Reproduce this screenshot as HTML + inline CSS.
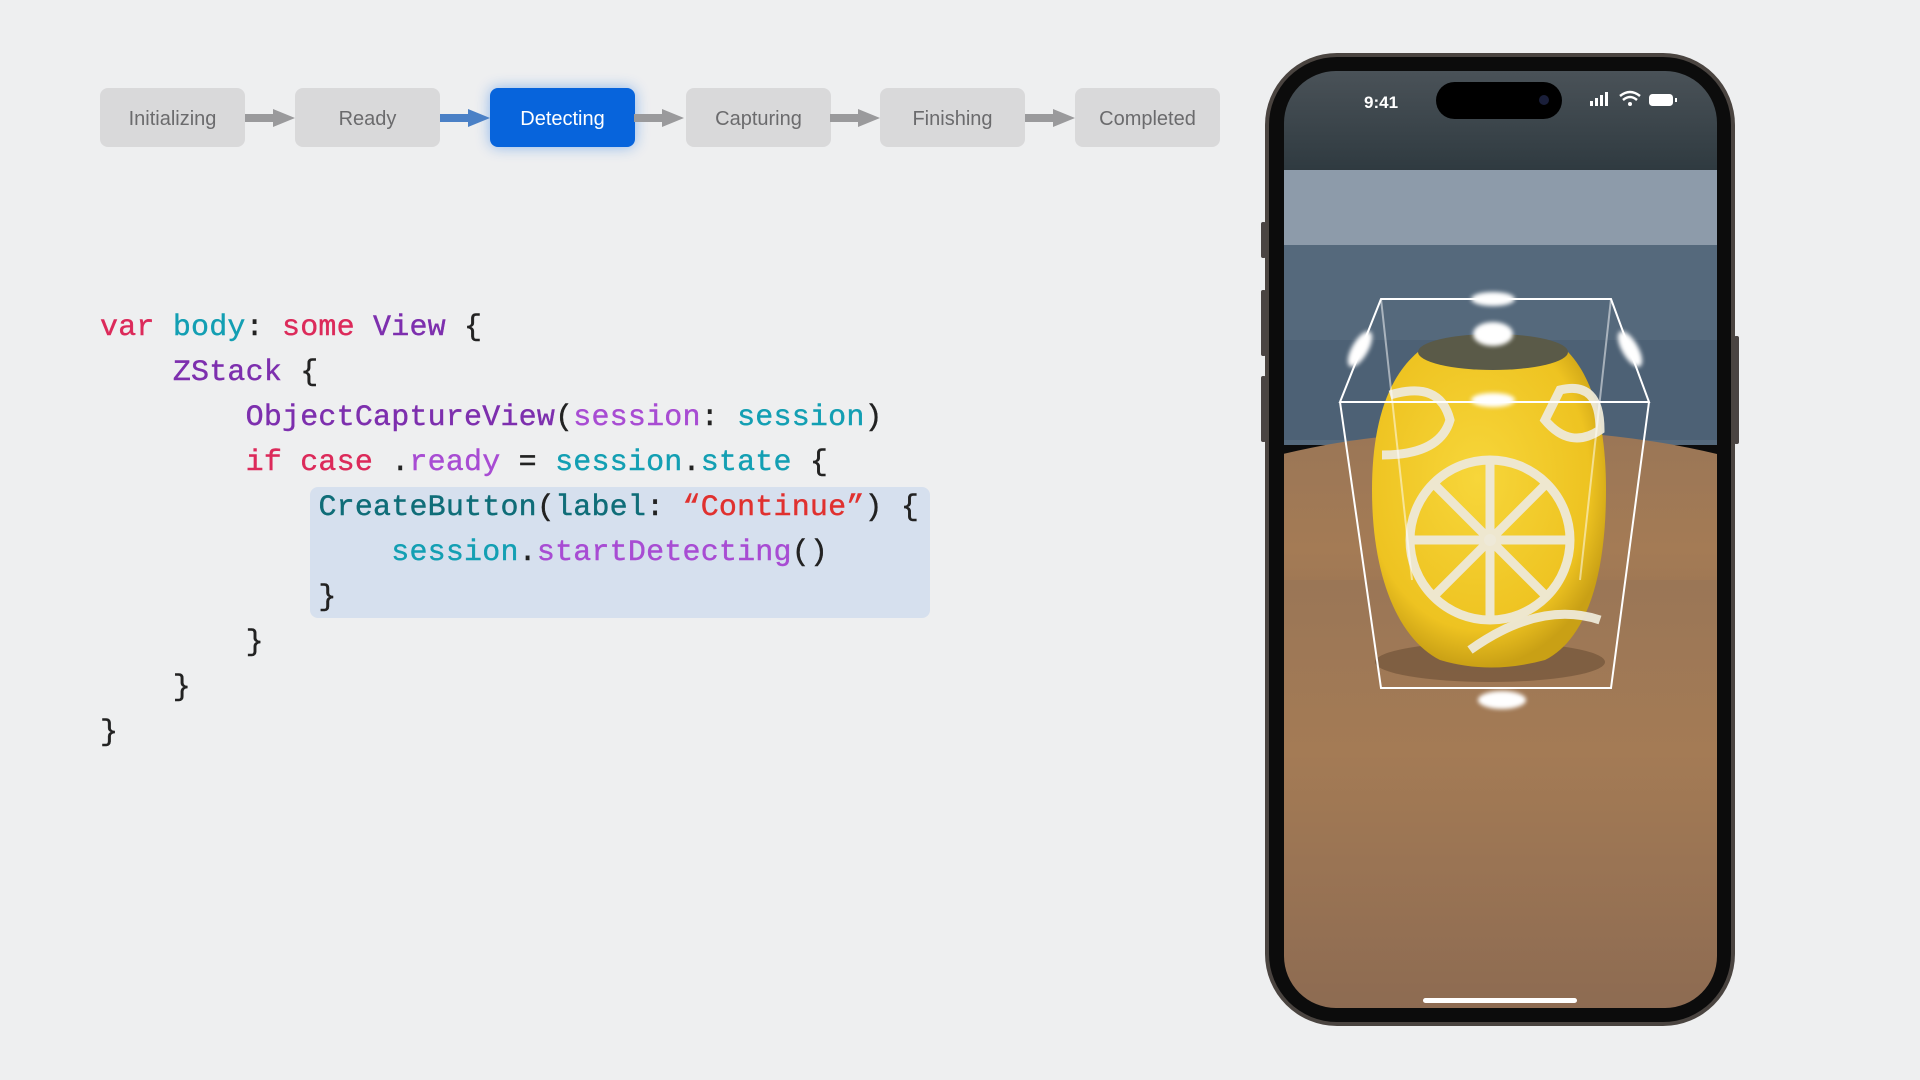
<!DOCTYPE html>
<html><head><meta charset="utf-8"><style>
*{margin:0;padding:0;box-sizing:border-box}
body{width:1920px;height:1080px;background:#eeeff0;position:relative;overflow:hidden;font-family:"Liberation Sans",sans-serif}
.box{position:absolute;top:88px;width:145px;height:59px;border-radius:8px;background:#d9d9da;color:#6b6b6d;font-size:20px;display:flex;align-items:center;justify-content:center;padding-top:4px}
.box.on{background:#0764dc;color:#fff;box-shadow:0 0 14px rgba(20,110,230,.45)}
.arr{position:absolute;top:109px;width:50px;height:18px}
.code{position:absolute;left:100px;top:306px;font-family:"Liberation Mono",monospace;font-size:30px;line-height:45px;letter-spacing:0.2px;color:#222;white-space:pre;-webkit-text-stroke:0.4px currentColor}
.hl{position:absolute;left:310px;top:487px;width:620px;height:131px;background:#d6e0ee;border-radius:8px}
.k{color:#dc2a5a}.t{color:#139fb3}.p{color:#7d2fae}.m{color:#a84cd3}.d{color:#0f6d78}.s{color:#e0312f}
</style></head><body>
<div class="box" style="left:100px">Initializing</div>
<div class="box" style="left:295px">Ready</div>
<div class="box on" style="left:490px">Detecting</div>
<div class="box" style="left:686px">Capturing</div>
<div class="box" style="left:880px">Finishing</div>
<div class="box" style="left:1075px">Completed</div>
<svg class="arr" style="left:245px" viewBox="0 0 50 18"><rect x="0" y="5" width="30" height="8" fill="#9a9a9c"/><polygon points="28,0 50,9 28,18" fill="#9a9a9c"/></svg>
<svg class="arr" style="left:440px" viewBox="0 0 50 18"><rect x="0" y="5" width="30" height="8" fill="#4a80c6"/><polygon points="28,0 50,9 28,18" fill="#4a80c6"/></svg>
<svg class="arr" style="left:634px" viewBox="0 0 50 18"><rect x="0" y="5" width="30" height="8" fill="#9a9a9c"/><polygon points="28,0 50,9 28,18" fill="#9a9a9c"/></svg>
<svg class="arr" style="left:830px" viewBox="0 0 50 18"><rect x="0" y="5" width="30" height="8" fill="#9a9a9c"/><polygon points="28,0 50,9 28,18" fill="#9a9a9c"/></svg>
<svg class="arr" style="left:1025px" viewBox="0 0 50 18"><rect x="0" y="5" width="30" height="8" fill="#9a9a9c"/><polygon points="28,0 50,9 28,18" fill="#9a9a9c"/></svg>

<div class="hl"></div>
<div class="code"><span class="k">var</span> <span class="t">body</span>: <span class="k">some</span> <span class="p">View</span> {
    <span class="p">ZStack</span> {
        <span class="p">ObjectCaptureView</span>(<span class="m">session</span>: <span class="t">session</span>)
        <span class="k">if case</span> .<span class="m">ready</span> = <span class="t">session</span>.<span class="t">state</span> {
            <span class="d">CreateButton</span>(<span class="d">label</span>: <span class="s">“Continue”</span>) {
                <span class="t">session</span>.<span class="m">startDetecting</span>()
            }
        }
    }
}</div>

<svg style="position:absolute;left:0;top:0" width="1920" height="1080">
<defs>
<linearGradient id="wood" x1="0" y1="0" x2="0" y2="1"><stop offset="0" stop-color="#9a7656"/><stop offset=".4" stop-color="#a47b55"/><stop offset="1" stop-color="#8d6b52"/></linearGradient>
<linearGradient id="top" x1="0" y1="0" x2="0" y2="1"><stop offset="0" stop-color="#4a5258"/><stop offset="1" stop-color="#2f3a40"/></linearGradient>
<radialGradient id="vase" cx=".45" cy=".4" r=".6"><stop offset="0" stop-color="#f7d63a"/><stop offset=".8" stop-color="#eec321"/><stop offset="1" stop-color="#c9a015"/></radialGradient>
<clipPath id="scr"><rect x="1284" y="71" width="433" height="937" rx="52"/></clipPath>
<filter id="bl"><feGaussianBlur stdDeviation="2"/></filter>
</defs>
<rect x="1265" y="53" width="470" height="973" rx="72" fill="#4a4440"/>
<rect x="1269" y="57" width="462" height="965" rx="68" fill="#0c0c0c"/>
<rect x="1261" y="222" width="5" height="36" rx="2" fill="#4a4442"/>
<rect x="1261" y="290" width="5" height="66" rx="2" fill="#4a4442"/>
<rect x="1261" y="376" width="5" height="66" rx="2" fill="#4a4442"/>
<rect x="1734" y="336" width="5" height="108" rx="2" fill="#4a4442"/>
<g clip-path="url(#scr)">
<rect x="1284" y="71" width="433" height="100" fill="url(#top)"/>
<rect x="1284" y="170" width="433" height="80" fill="#8d9baa"/>
<rect x="1284" y="245" width="433" height="200" fill="#55697c"/>
<rect x="1284" y="340" width="433" height="100" fill="#4d6175"/>
<ellipse cx="1500" cy="580" rx="400" ry="150" fill="url(#wood)"/>
<rect x="1284" y="580" width="433" height="430" fill="url(#wood)"/>
<ellipse cx="1490" cy="662" rx="115" ry="20" fill="#6a4e35" opacity=".6"/>
<path d="M1418 352 C1385 380 1372 430 1372 490 C1372 580 1400 640 1440 660 Q1490 675 1545 660 C1585 640 1606 580 1606 490 C1606 430 1595 380 1568 352 Z" fill="url(#vase)"/>
<ellipse cx="1493" cy="352" rx="75" ry="18" fill="#5a5a48"/>
<g fill="none" stroke="#eee9d8" stroke-width="9" opacity=".95">
<circle cx="1490" cy="540" r="80"/>
<path d="M1490 460V620M1410 540H1570M1433 483L1547 597M1547 483L1433 597"/>
<path d="M1390 395 Q1440 380 1450 420 Q1440 455 1382 455"/>
<path d="M1560 390 Q1600 380 1600 430 Q1570 450 1545 420Z"/>
<path d="M1470 650 Q1540 600 1600 620"/>
</g>
<circle cx="1490" cy="540" r="6" fill="#eee9d8"/>
<g stroke="#fff" stroke-width="2" fill="none">
<path d="M1381 299H1611L1649 402H1340Z"/>
<path d="M1340 402L1381 688H1611L1649 402"/>
<path d="M1381 299L1412 580M1611 299L1580 580" opacity=".5"/>
</g>
<g fill="#fff" filter="url(#bl)">
<ellipse cx="1493" cy="299" rx="22" ry="7"/>
<ellipse cx="1493" cy="334" rx="20" ry="12"/>
<ellipse cx="1493" cy="400" rx="22" ry="7"/>
<ellipse cx="1360" cy="349" rx="8" ry="20" transform="rotate(30 1360 349)"/>
<ellipse cx="1630" cy="349" rx="8" ry="20" transform="rotate(-30 1630 349)"/>
<ellipse cx="1502" cy="700" rx="24" ry="9"/>
</g>
<rect x="1436" y="82" width="126" height="37" rx="18.5" fill="#000"/>
<circle cx="1544" cy="100" r="5" fill="#1a1f3a"/>
<text x="1364" y="108" fill="#fff" font-family="Liberation Sans" font-weight="bold" font-size="17">9:41</text>
<g fill="#fff"><rect x="1590" y="101" width="3" height="5"/><rect x="1595" y="98" width="3" height="8"/><rect x="1600" y="95" width="3" height="11"/><rect x="1605" y="92" width="3" height="14"/></g>
<path d="M1620 96 Q1630 88 1640 96 M1623 100 Q1630 94 1637 100" stroke="#fff" stroke-width="2.5" fill="none"/><circle cx="1630" cy="104" r="2" fill="#fff"/>
<rect x="1649" y="94" width="24" height="12" rx="3.5" fill="#fff"/><rect x="1675" y="98" width="2" height="4" fill="#fff"/>
<rect x="1423" y="998" width="154" height="5" rx="2.5" fill="#fff"/>
</g>
</svg>
</body></html>
